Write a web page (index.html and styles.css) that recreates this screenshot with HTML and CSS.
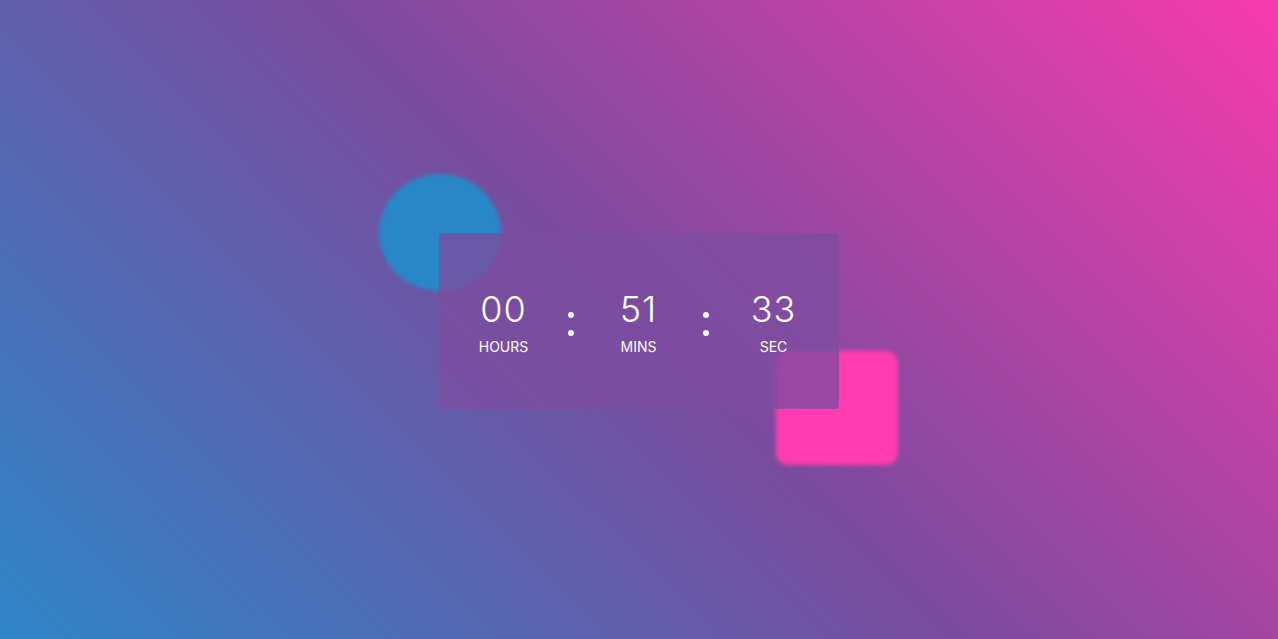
FILE: index.html
```html
<!DOCTYPE html>
<html lang="en">
<head>
<meta charset="utf-8">
<title>Countdown</title>
<link rel="stylesheet" href="styles.css">
</head>
<body>
  <main class="stage">
    <div class="wrap">
      <span class="shape circle"></span>
      <span class="shape square"></span>
      <section class="card">
        <div class="timer">
          <div class="unit"><span class="num">00</span><span class="label">HOURS</span></div>
          <div class="colon"><i></i><i></i></div>
          <div class="unit"><span class="num">51</span><span class="label">MINS</span></div>
          <div class="colon"><i></i><i></i></div>
          <div class="unit"><span class="num">33</span><span class="label">SEC</span></div>
        </div>
      </section>
    </div>
  </main>
</body>
</html>
```

FILE: styles.css
```css
* { box-sizing: border-box; }
html, body { margin: 0; padding: 0; height: 100%; }
body {
  font-family: "Inter", "Open Sans", sans-serif;
  background: linear-gradient(45deg, #2e86c8 0%, #7a4b9e 50%, #f83bad 100%);
  overflow: hidden;
}
.stage {
  height: 100vh;
  display: flex;
  align-items: center;
  justify-content: center;
}
.wrap {
  position: relative;
  width: 400px;
  height: 176px;
  margin-top: 3px;
  margin-left: -1px;
}
.shape {
  position: absolute;
  filter: blur(2px);
}
.circle {
  width: 122px;
  height: 117px;
  left: -60px;
  top: -59px;
  border-radius: 50%;
  background: #2987c7;
}
.square {
  width: 122px;
  height: 114px;
  left: 337px;
  top: 118px;
  border-radius: 12px;
  background: #ff3bb0;
}
.card {
  position: relative;
  width: 100%;
  height: 100%;
  border-radius: 4px;
  background: rgba(123, 77, 160, 0.77);
  display: flex;
  justify-content: center;
  padding-top: 54px;
}
.timer {
  display: flex;
  align-items: flex-start;
  color: #fff;
}
.unit {
  width: 80px;
  display: flex;
  flex-direction: column;
  align-items: center;
}
.num {
  font-size: 36px;
  line-height: 44px;
  font-weight: 300;
  letter-spacing: 1px;
}
.label {
  font-size: 14px;
  line-height: 18px;
  margin-top: 7px;
  font-weight: 400;
}
.colon {
  width: 55px;
  display: flex;
  flex-direction: column;
  align-items: center;
  gap: 12px;
  padding-top: 25px;
}
.colon i {
  display: block;
  width: 6px;
  height: 6px;
  border-radius: 50%;
  background: #fff;
}
```
